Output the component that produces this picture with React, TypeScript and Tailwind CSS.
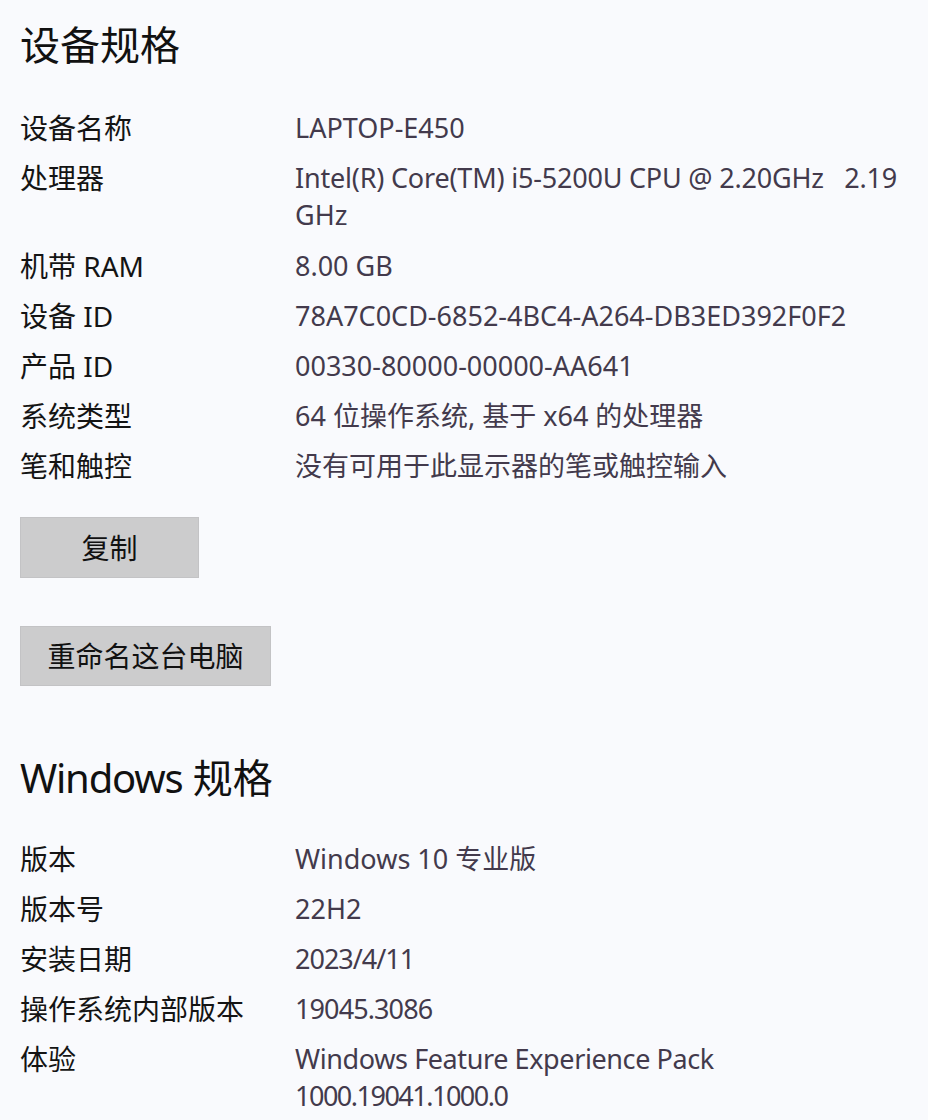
import React from "react";

const font = { fontFamily: '"Noto Sans", "Noto Sans CJK SC", sans-serif' };

type Row = { label: string; value: React.ReactNode; extra?: boolean };

const deviceRows: Row[] = [
  { label: "设备名称", value: "LAPTOP-E450" },
  {
    label: "处理器",
    extra: true,
    value: (
      <>
        <span className="whitespace-pre tracking-[-0.2px]">Intel(R) Core(TM) i5-5200U CPU @ 2.20GHz   2.19</span>
        <br />
        GHz
      </>
    ),
  },
  { label: "机带 RAM", value: "8.00 GB" },
  { label: "设备 ID", value: "78A7C0CD-6852-4BC4-A264-DB3ED392F0F2" },
  { label: "产品 ID", value: "00330-80000-00000-AA641" },
  { label: "系统类型", value: "64 位操作系统, 基于 x64 的处理器" },
  { label: "笔和触控", value: "没有可用于此显示器的笔或触控输入" },
];

const winRows: Row[] = [
  { label: "版本", value: "Windows 10 专业版" },
  { label: "版本号", value: "22H2" },
  { label: "安装日期", value: <span className="tracking-[-1px]">2023/4/11</span> },
  { label: "操作系统内部版本", value: <span className="tracking-[-0.9px]">19045.3086</span> },
  {
    label: "体验",
    extra: true,
    value: (
      <>
        <span className="tracking-[-0.4px]">Windows Feature Experience Pack</span>
        <br />
        <span className="tracking-[-1.5px]">1000.19041.1000.0</span>
      </>
    ),
  },
];

function Rows({ rows }: { rows: Row[] }) {
  return (
    <div className="flex flex-col gap-[14px]">
      {rows.map((r) =>
        r.extra ? (
          <div key={r.label} className="grid grid-cols-[275px_1fr] pb-[1px] text-[28px] leading-[36px]">
            <div className="text-[#141414]">{r.label}</div>
            <div className="text-[27px] leading-[36.5px] text-[#433a4c]">{r.value}</div>
          </div>
        ) : (
          <div key={r.label} className="grid grid-cols-[275px_1fr] text-[28px] leading-[36px]">
            <div className="text-[#141414]">{r.label}</div>
            <div className="text-[27px] text-[#433a4c]">{r.value}</div>
          </div>
        )
      )}
    </div>
  );
}

export default function App() {
  return (
    <div className="min-h-[1120px] w-[928px] bg-[#f9fafd] pl-[20px] pr-[10px] pt-[17px]" style={font}>
      <h1 className="text-[40px] leading-[56px] text-[#111]">设备规格</h1>
      <div className="mt-[37px]">
        <Rows rows={deviceRows} />
      </div>
      <div className="mt-[33px] flex flex-col items-start gap-[48px]">
        <button className="h-[61px] w-[179px] border border-[#c3c3c5] bg-[#cccccd] text-[28px] text-[#111]">
          复制
        </button>
        <button className="h-[60px] w-[251px] border border-[#c3c3c5] bg-[#cccccd] text-[28px] text-[#111]">
          重命名这台电脑
        </button>
      </div>
      <h2 className="mt-[64px] text-[40px] leading-[56px] text-[#111]">
        <span className="tracking-[-1.2px]">Windows</span> 规格
      </h2>
      <div className="mt-[35px]">
        <Rows rows={winRows} />
      </div>
    </div>
  );
}
